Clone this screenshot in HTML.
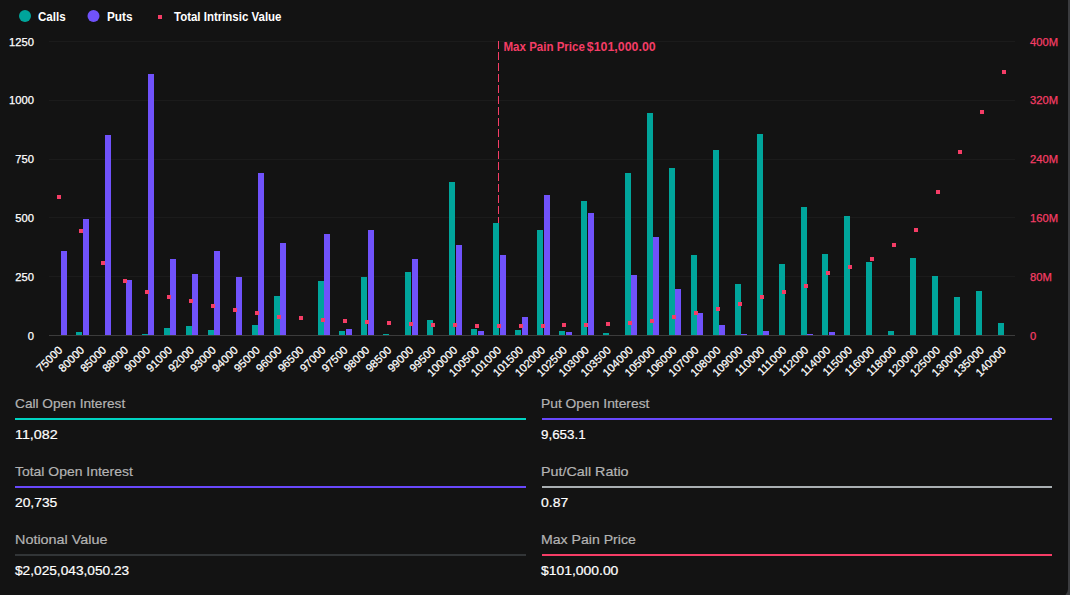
<!DOCTYPE html>
<html><head><meta charset="utf-8">
<style>
html,body{margin:0;padding:0;}
body{width:1070px;height:595px;overflow:hidden;background:#131313;position:relative;font-family:"Liberation Sans",sans-serif;}
svg{position:absolute;left:0;top:0;}
svg text{font-family:"Liberation Sans",sans-serif;}
.yl{font-size:11.2px;fill:#ffffff;stroke:#ffffff;stroke-width:0.25px;}
.yr{font-size:11.2px;fill:#f53d66;stroke:#f53d66;stroke-width:0.25px;}
.xl{font-size:11.2px;fill:#ffffff;stroke:#ffffff;stroke-width:0.25px;}
.lg{font-size:12px;font-weight:bold;fill:#ffffff;}
.ml{font-size:12.5px;font-weight:bold;fill:#f53d66;}
.lab{font-size:13.6px;fill:#b3b3b3;stroke:#b3b3b3;stroke-width:0.2px;}
.val{font-size:13.6px;fill:#ffffff;stroke:#ffffff;stroke-width:0.2px;}
.sb{position:absolute;left:1068px;top:0;width:2px;height:595px;background:#3b3c3f;}
.sb2{position:absolute;left:1058px;top:580px;width:12px;height:15px;background:#3b3c3f;}
.sb3{position:absolute;left:1054px;top:570px;width:14px;height:27px;background:#131313;border-bottom-right-radius:8px;}
</style></head>
<body>
<svg width="1070" height="595" viewBox="0 0 1070 595">
<rect x="49" y="41" width="966" height="1" fill="#1b1b1b"/>
<rect x="49" y="100" width="966" height="1" fill="#1b1b1b"/>
<rect x="49" y="159" width="966" height="1" fill="#1b1b1b"/>
<rect x="49" y="217" width="966" height="1" fill="#1b1b1b"/>
<rect x="49" y="276" width="966" height="1" fill="#1b1b1b"/>
<rect x="49" y="335" width="966" height="1" fill="#3c3c3c"/>
<text id="yl0" x="34" y="45.50" class="yl" text-anchor="end">1250</text>
<text id="yl1" x="34" y="104.30" class="yl" text-anchor="end">1000</text>
<text id="yl2" x="34" y="163.10" class="yl" text-anchor="end">750</text>
<text id="yl3" x="34" y="221.90" class="yl" text-anchor="end">500</text>
<text id="yl4" x="34" y="280.70" class="yl" text-anchor="end">250</text>
<text id="yl5" x="34" y="339.50" class="yl" text-anchor="end">0</text>
<text id="yr0" x="1030" y="45.50" class="yr">400M</text>
<text id="yr1" x="1030" y="104.30" class="yr">320M</text>
<text id="yr2" x="1030" y="163.10" class="yr">240M</text>
<text id="yr3" x="1030" y="221.90" class="yr">160M</text>
<text id="yr4" x="1030" y="280.70" class="yr">80M</text>
<text id="yr5" x="1030" y="339.50" class="yr">0</text>
<line x1="498.5" y1="41" x2="498.5" y2="335" stroke="#f53d66" stroke-width="1" stroke-dasharray="8 3"/>
<rect x="61" y="251" width="6" height="84" fill="#7052fb"/>
<rect x="76" y="332" width="6" height="3" fill="#00a59b"/>
<rect x="83" y="219" width="6" height="116" fill="#7052fb"/>
<rect x="105" y="135" width="6" height="200" fill="#7052fb"/>
<rect x="126" y="280" width="6" height="55" fill="#7052fb"/>
<rect x="142" y="334" width="6" height="1" fill="#00a59b"/>
<rect x="148" y="74" width="6" height="261" fill="#7052fb"/>
<rect x="164" y="328" width="6" height="7" fill="#00a59b"/>
<rect x="170" y="259" width="6" height="76" fill="#7052fb"/>
<rect x="186" y="326" width="6" height="9" fill="#00a59b"/>
<rect x="192" y="274" width="6" height="61" fill="#7052fb"/>
<rect x="208" y="330" width="6" height="5" fill="#00a59b"/>
<rect x="214" y="251" width="6" height="84" fill="#7052fb"/>
<rect x="236" y="277" width="6" height="58" fill="#7052fb"/>
<rect x="252" y="325" width="6" height="10" fill="#00a59b"/>
<rect x="258" y="173" width="6" height="162" fill="#7052fb"/>
<rect x="274" y="296" width="6" height="39" fill="#00a59b"/>
<rect x="280" y="243" width="6" height="92" fill="#7052fb"/>
<rect x="318" y="281" width="6" height="54" fill="#00a59b"/>
<rect x="324" y="234" width="6" height="101" fill="#7052fb"/>
<rect x="339" y="331" width="6" height="4" fill="#00a59b"/>
<rect x="346" y="329" width="6" height="6" fill="#7052fb"/>
<rect x="361" y="277" width="6" height="58" fill="#00a59b"/>
<rect x="368" y="230" width="6" height="105" fill="#7052fb"/>
<rect x="383" y="334" width="6" height="1" fill="#00a59b"/>
<rect x="405" y="272" width="6" height="63" fill="#00a59b"/>
<rect x="412" y="259" width="6" height="76" fill="#7052fb"/>
<rect x="427" y="320" width="6" height="15" fill="#00a59b"/>
<rect x="449" y="182" width="6" height="153" fill="#00a59b"/>
<rect x="456" y="245" width="6" height="90" fill="#7052fb"/>
<rect x="471" y="329" width="6" height="6" fill="#00a59b"/>
<rect x="478" y="331" width="6" height="4" fill="#7052fb"/>
<rect x="493" y="223" width="6" height="112" fill="#00a59b"/>
<rect x="500" y="255" width="6" height="80" fill="#7052fb"/>
<rect x="515" y="330" width="6" height="5" fill="#00a59b"/>
<rect x="522" y="317" width="6" height="18" fill="#7052fb"/>
<rect x="537" y="230" width="6" height="105" fill="#00a59b"/>
<rect x="544" y="195" width="6" height="140" fill="#7052fb"/>
<rect x="559" y="331" width="6" height="4" fill="#00a59b"/>
<rect x="566" y="332" width="6" height="3" fill="#7052fb"/>
<rect x="581" y="201" width="6" height="134" fill="#00a59b"/>
<rect x="588" y="213" width="6" height="122" fill="#7052fb"/>
<rect x="603" y="333" width="6" height="2" fill="#00a59b"/>
<rect x="625" y="173" width="6" height="162" fill="#00a59b"/>
<rect x="631" y="275" width="6" height="60" fill="#7052fb"/>
<rect x="647" y="113" width="6" height="222" fill="#00a59b"/>
<rect x="653" y="237" width="6" height="98" fill="#7052fb"/>
<rect x="669" y="168" width="6" height="167" fill="#00a59b"/>
<rect x="675" y="289" width="6" height="46" fill="#7052fb"/>
<rect x="691" y="255" width="6" height="80" fill="#00a59b"/>
<rect x="697" y="313" width="6" height="22" fill="#7052fb"/>
<rect x="713" y="150" width="6" height="185" fill="#00a59b"/>
<rect x="719" y="325" width="6" height="10" fill="#7052fb"/>
<rect x="735" y="284" width="6" height="51" fill="#00a59b"/>
<rect x="741" y="334" width="6" height="1" fill="#7052fb"/>
<rect x="757" y="134" width="6" height="201" fill="#00a59b"/>
<rect x="763" y="331" width="6" height="4" fill="#7052fb"/>
<rect x="779" y="264" width="6" height="71" fill="#00a59b"/>
<rect x="801" y="207" width="6" height="128" fill="#00a59b"/>
<rect x="807" y="334" width="6" height="1" fill="#7052fb"/>
<rect x="822" y="254" width="6" height="81" fill="#00a59b"/>
<rect x="829" y="332" width="6" height="3" fill="#7052fb"/>
<rect x="844" y="216" width="6" height="119" fill="#00a59b"/>
<rect x="866" y="262" width="6" height="73" fill="#00a59b"/>
<rect x="888" y="331" width="6" height="4" fill="#00a59b"/>
<rect x="910" y="258" width="6" height="77" fill="#00a59b"/>
<rect x="932" y="276" width="6" height="59" fill="#00a59b"/>
<rect x="954" y="297" width="6" height="38" fill="#00a59b"/>
<rect x="976" y="291" width="6" height="44" fill="#00a59b"/>
<rect x="998" y="323" width="6" height="12" fill="#00a59b"/>
<text id="ml1" x="503.5" y="51" class="ml" textLength="81.40" lengthAdjust="spacingAndGlyphs">Max Pain Price</text>
<text id="ml2" x="586.8" y="51" class="ml" textLength="68.93" lengthAdjust="spacingAndGlyphs">$101,000.00</text>
<rect x="57" y="195" width="4" height="4" fill="#f53d66"/>
<rect x="79" y="229" width="4" height="4" fill="#f53d66"/>
<rect x="101" y="261" width="4" height="4" fill="#f53d66"/>
<rect x="123" y="279" width="4" height="4" fill="#f53d66"/>
<rect x="145" y="290" width="4" height="4" fill="#f53d66"/>
<rect x="167" y="295" width="4" height="4" fill="#f53d66"/>
<rect x="189" y="299" width="4" height="4" fill="#f53d66"/>
<rect x="211" y="304" width="4" height="4" fill="#f53d66"/>
<rect x="233" y="308" width="4" height="4" fill="#f53d66"/>
<rect x="255" y="311" width="4" height="4" fill="#f53d66"/>
<rect x="277" y="315" width="4" height="4" fill="#f53d66"/>
<rect x="299" y="316" width="4" height="4" fill="#f53d66"/>
<rect x="321" y="318" width="4" height="4" fill="#f53d66"/>
<rect x="343" y="319" width="4" height="4" fill="#f53d66"/>
<rect x="365" y="320" width="4" height="4" fill="#f53d66"/>
<rect x="387" y="321" width="4" height="4" fill="#f53d66"/>
<rect x="409" y="322" width="4" height="4" fill="#f53d66"/>
<rect x="431" y="323" width="4" height="4" fill="#f53d66"/>
<rect x="453" y="323" width="4" height="4" fill="#f53d66"/>
<rect x="475" y="324" width="4" height="4" fill="#f53d66"/>
<rect x="497" y="324" width="4" height="4" fill="#f53d66"/>
<rect x="519" y="324" width="4" height="4" fill="#f53d66"/>
<rect x="541" y="324" width="4" height="4" fill="#f53d66"/>
<rect x="562" y="323" width="4" height="4" fill="#f53d66"/>
<rect x="584" y="323" width="4" height="4" fill="#f53d66"/>
<rect x="606" y="322" width="4" height="4" fill="#f53d66"/>
<rect x="628" y="321" width="4" height="4" fill="#f53d66"/>
<rect x="650" y="319" width="4" height="4" fill="#f53d66"/>
<rect x="672" y="315" width="4" height="4" fill="#f53d66"/>
<rect x="694" y="311" width="4" height="4" fill="#f53d66"/>
<rect x="716" y="307" width="4" height="4" fill="#f53d66"/>
<rect x="738" y="302" width="4" height="4" fill="#f53d66"/>
<rect x="760" y="295" width="4" height="4" fill="#f53d66"/>
<rect x="782" y="290" width="4" height="4" fill="#f53d66"/>
<rect x="804" y="284" width="4" height="4" fill="#f53d66"/>
<rect x="826" y="271" width="4" height="4" fill="#f53d66"/>
<rect x="848" y="265" width="4" height="4" fill="#f53d66"/>
<rect x="870" y="257" width="4" height="4" fill="#f53d66"/>
<rect x="892" y="243" width="4" height="4" fill="#f53d66"/>
<rect x="914" y="228" width="4" height="4" fill="#f53d66"/>
<rect x="936" y="190" width="4" height="4" fill="#f53d66"/>
<rect x="958" y="150" width="4" height="4" fill="#f53d66"/>
<rect x="980" y="110" width="4" height="4" fill="#f53d66"/>
<rect x="1002" y="70" width="4" height="4" fill="#f53d66"/>
<text transform="translate(63.07,350.8) rotate(-45)" text-anchor="end" class="xl">75000</text>
<text transform="translate(85.01,350.8) rotate(-45)" text-anchor="end" class="xl">80000</text>
<text transform="translate(106.96,350.8) rotate(-45)" text-anchor="end" class="xl">85000</text>
<text transform="translate(128.90,350.8) rotate(-45)" text-anchor="end" class="xl">88000</text>
<text transform="translate(150.84,350.8) rotate(-45)" text-anchor="end" class="xl">90000</text>
<text transform="translate(172.79,350.8) rotate(-45)" text-anchor="end" class="xl">91000</text>
<text transform="translate(194.73,350.8) rotate(-45)" text-anchor="end" class="xl">92000</text>
<text transform="translate(216.67,350.8) rotate(-45)" text-anchor="end" class="xl">93000</text>
<text transform="translate(238.62,350.8) rotate(-45)" text-anchor="end" class="xl">94000</text>
<text transform="translate(260.56,350.8) rotate(-45)" text-anchor="end" class="xl">95000</text>
<text transform="translate(282.50,350.8) rotate(-45)" text-anchor="end" class="xl">96000</text>
<text transform="translate(304.45,350.8) rotate(-45)" text-anchor="end" class="xl">96500</text>
<text transform="translate(326.39,350.8) rotate(-45)" text-anchor="end" class="xl">97000</text>
<text transform="translate(348.33,350.8) rotate(-45)" text-anchor="end" class="xl">97500</text>
<text transform="translate(370.28,350.8) rotate(-45)" text-anchor="end" class="xl">98000</text>
<text transform="translate(392.22,350.8) rotate(-45)" text-anchor="end" class="xl">98500</text>
<text transform="translate(414.16,350.8) rotate(-45)" text-anchor="end" class="xl">99000</text>
<text transform="translate(436.11,350.8) rotate(-45)" text-anchor="end" class="xl">99500</text>
<text transform="translate(458.05,350.8) rotate(-45)" text-anchor="end" class="xl">100000</text>
<text transform="translate(479.99,350.8) rotate(-45)" text-anchor="end" class="xl">100500</text>
<text transform="translate(501.94,350.8) rotate(-45)" text-anchor="end" class="xl">101000</text>
<text transform="translate(523.88,350.8) rotate(-45)" text-anchor="end" class="xl">101500</text>
<text transform="translate(545.82,350.8) rotate(-45)" text-anchor="end" class="xl">102000</text>
<text transform="translate(567.76,350.8) rotate(-45)" text-anchor="end" class="xl">102500</text>
<text transform="translate(589.71,350.8) rotate(-45)" text-anchor="end" class="xl">103000</text>
<text transform="translate(611.65,350.8) rotate(-45)" text-anchor="end" class="xl">103500</text>
<text transform="translate(633.59,350.8) rotate(-45)" text-anchor="end" class="xl">104000</text>
<text transform="translate(655.54,350.8) rotate(-45)" text-anchor="end" class="xl">105000</text>
<text transform="translate(677.48,350.8) rotate(-45)" text-anchor="end" class="xl">106000</text>
<text transform="translate(699.42,350.8) rotate(-45)" text-anchor="end" class="xl">107000</text>
<text transform="translate(721.37,350.8) rotate(-45)" text-anchor="end" class="xl">108000</text>
<text transform="translate(743.31,350.8) rotate(-45)" text-anchor="end" class="xl">109000</text>
<text transform="translate(765.25,350.8) rotate(-45)" text-anchor="end" class="xl">110000</text>
<text transform="translate(787.20,350.8) rotate(-45)" text-anchor="end" class="xl">111000</text>
<text transform="translate(809.14,350.8) rotate(-45)" text-anchor="end" class="xl">112000</text>
<text transform="translate(831.08,350.8) rotate(-45)" text-anchor="end" class="xl">114000</text>
<text transform="translate(853.03,350.8) rotate(-45)" text-anchor="end" class="xl">115000</text>
<text transform="translate(874.97,350.8) rotate(-45)" text-anchor="end" class="xl">116000</text>
<text transform="translate(896.91,350.8) rotate(-45)" text-anchor="end" class="xl">118000</text>
<text transform="translate(918.86,350.8) rotate(-45)" text-anchor="end" class="xl">120000</text>
<text transform="translate(940.80,350.8) rotate(-45)" text-anchor="end" class="xl">125000</text>
<text transform="translate(962.74,350.8) rotate(-45)" text-anchor="end" class="xl">130000</text>
<text transform="translate(984.69,350.8) rotate(-45)" text-anchor="end" class="xl">135000</text>
<text transform="translate(1006.63,350.8) rotate(-45)" text-anchor="end" class="xl">140000</text>
<circle cx="25" cy="16" r="6" fill="#00a59b"/>
<text id="lg0" x="38" y="21" class="lg" textLength="27.70" lengthAdjust="spacingAndGlyphs">Calls</text>
<circle cx="93.5" cy="16" r="6" fill="#7052fb"/>
<text id="lg1" x="107" y="21" class="lg" textLength="25.56" lengthAdjust="spacingAndGlyphs">Puts</text>
<rect x="158" y="15" width="4" height="4" fill="#f53d66"/>
<text id="lg2" x="174" y="21" class="lg" textLength="107.46" lengthAdjust="spacingAndGlyphs">Total Intrinsic Value</text>
<text id="lab0" x="15" y="407.7" class="lab" textLength="110.25" lengthAdjust="spacingAndGlyphs">Call Open Interest</text>
<rect x="15" y="418" width="511" height="2" fill="#00d4c2"/>
<text id="val0" x="15" y="439" class="val" textLength="42.59" lengthAdjust="spacingAndGlyphs">11,082</text>
<text id="lab1" x="541" y="407.7" class="lab" textLength="108.43" lengthAdjust="spacingAndGlyphs">Put Open Interest</text>
<rect x="542" y="418" width="510" height="2" fill="#6848fc"/>
<text id="val1" x="541" y="439" class="val" textLength="44.64" lengthAdjust="spacingAndGlyphs">9,653.1</text>
<text id="lab2" x="15" y="475.7" class="lab" textLength="117.80" lengthAdjust="spacingAndGlyphs">Total Open Interest</text>
<rect x="15" y="486" width="511" height="2" fill="#6848fc"/>
<text id="val2" x="15" y="507" class="val" textLength="42.25" lengthAdjust="spacingAndGlyphs">20,735</text>
<text id="lab3" x="541" y="475.7" class="lab" textLength="87.52" lengthAdjust="spacingAndGlyphs">Put/Call Ratio</text>
<rect x="542" y="486" width="510" height="2" fill="#a9afb2"/>
<text id="val3" x="541" y="507" class="val" textLength="27.16" lengthAdjust="spacingAndGlyphs">0.87</text>
<text id="lab4" x="15" y="543.7" class="lab" textLength="92.49" lengthAdjust="spacingAndGlyphs">Notional Value</text>
<rect x="15" y="554" width="511" height="2" fill="#323537"/>
<text id="val4" x="15" y="575" class="val" textLength="114.19" lengthAdjust="spacingAndGlyphs">$2,025,043,050.23</text>
<text id="lab5" x="541" y="543.7" class="lab" textLength="94.79" lengthAdjust="spacingAndGlyphs">Max Pain Price</text>
<rect x="542" y="554" width="510" height="2" fill="#f53d66"/>
<text id="val5" x="541" y="575" class="val" textLength="77.36" lengthAdjust="spacingAndGlyphs">$101,000.00</text>
</svg>
<div class="sb"></div><div class="sb2"></div><div class="sb3"></div>
</body></html>
